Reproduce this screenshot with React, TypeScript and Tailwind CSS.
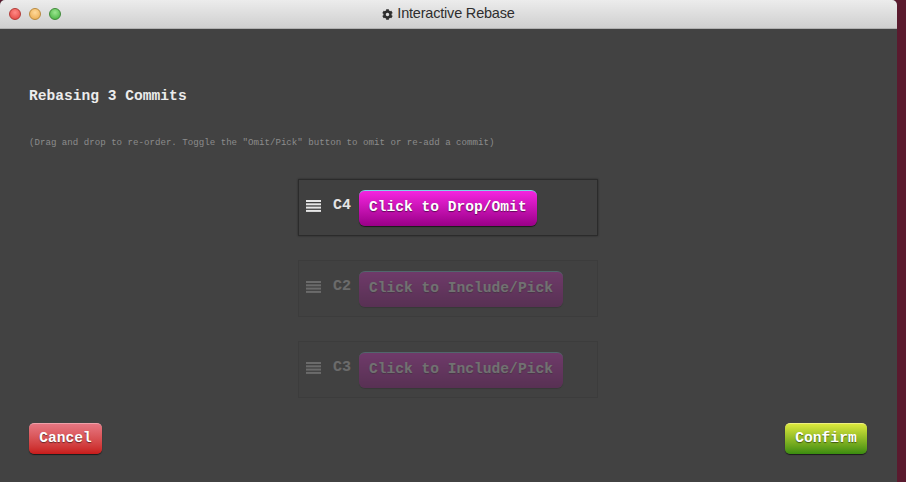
import React from 'react';
import { FaCog } from 'react-icons/fa';

const mono = { fontFamily: '"Liberation Mono", "DejaVu Sans Mono", monospace' };

const Handle = () => (
  <svg width="15" height="12" viewBox="0 0 15 12" className="shrink-0 block -mt-[3px]">
    <rect x="0" y="0" width="15" height="2" fill="#e6e6e6" />
    <rect x="0" y="3.3" width="15" height="2" fill="#e6e6e6" />
    <rect x="0" y="6.6" width="15" height="2" fill="#e6e6e6" />
    <rect x="0" y="9.9" width="15" height="2" fill="#e6e6e6" />
  </svg>
);

type Commit = { id: string; picked: boolean };

const commits: Commit[] = [
  { id: 'C4', picked: true },
  { id: 'C2', picked: false },
  { id: 'C3', picked: false },
];

const CommitRow = ({ commit }: { commit: Commit }) => (
  <div
    className={
      commit.picked
        ? 'w-[300px] h-[57px] flex items-center pl-[7px] border border-[#2b2b2b] bg-[#404040] shadow-[0_0_2px_rgba(0,0,0,0.4)]'
        : 'w-[300px] h-[57px] flex items-center pl-[7px] border border-[#2b2b2b] bg-[#404040] opacity-25'
    }
  >
    <Handle />
    <span className="ml-[12px] -mt-[2px] w-[26px] text-[15px] font-bold text-[#e4e4e4]" style={mono}>
      {commit.id}
    </span>
    <button
      className="h-[36px] px-[10px] rounded-[6px] border-t border-[#7fd0e8] bg-gradient-to-b from-[#f524e0] to-[#9a0088] text-white text-[14.6px] font-bold shadow-[0_1px_1px_rgba(0,0,0,0.6)] [text-shadow:0_1px_1px_rgba(0,0,0,0.5)]"
      style={mono}
    >
      {commit.picked ? 'Click to Drop/Omit' : 'Click to Include/Pick'}
    </button>
  </div>
);

const App = () => {
  return (
    <div className="w-[906px] h-[482px] flex bg-[#5a1a2e] overflow-hidden">
      <div className="w-[897px] h-full flex flex-col bg-[#424242] rounded-t-[5px] overflow-hidden">
        {/* title bar */}
        <div className="relative h-[29px] shrink-0 flex items-center justify-center bg-gradient-to-b from-[#ececec] to-[#cfcfcf] border-b border-[#b0b0b0]">
          <div className="absolute left-[9px] top-[8px] flex gap-[8px]">
            <span className="w-[12px] h-[12px] rounded-full bg-[radial-gradient(circle_at_50%_35%,#ff8a86,#e0413c)] border border-[#b23a36]" />
            <span className="w-[12px] h-[12px] rounded-full bg-[radial-gradient(circle_at_50%_35%,#ffd99a,#e9a84a)] border border-[#b98a3e]" />
            <span className="w-[12px] h-[12px] rounded-full bg-[radial-gradient(circle_at_50%_35%,#9be58f,#3fae3a)] border border-[#3f8a38]" />
          </div>
          <div
            className="flex items-center gap-[4px] text-[14.5px] text-[#2e2e2e]"
            style={{ fontFamily: '"Liberation Sans", Arial, sans-serif' }}
          >
            <FaCog size={11} />
            <span className="tracking-[-0.2px]">Interactive Rebase</span>
          </div>
        </div>

        {/* body */}
        <div className="flex-1 flex flex-col px-[29px]">
          <h1 className="mt-[57px] text-[14.6px] leading-[20px] font-bold text-[#ececec]" style={mono}>
            Rebasing 3 Commits
          </h1>
          <p className="mt-[31px] text-[9.15px] leading-[12px] text-[#8c8c8c]" style={mono}>
            (Drag and drop to re-order. Toggle the "Omit/Pick" button to omit or re-add a commit)
          </p>

          <div className="mt-[30px] pr-[1px] flex flex-col items-center gap-[24px]">
            {commits.map((c) => (
              <CommitRow key={c.id} commit={c} />
            ))}
          </div>

          <div className="mt-[25px] flex justify-between pr-[1px]">
            <button
              className="w-[73px] h-[31px] rounded-[5px] border-t border-[#f0a0a8] bg-gradient-to-b from-[#e67682] to-[#c81a1a] text-white text-[14.6px] font-bold shadow-[0_1px_1px_rgba(0,0,0,0.6)] [text-shadow:0_1px_1px_rgba(0,0,0,0.5)]"
              style={mono}
            >
              Cancel
            </button>
            <button
              className="w-[82px] h-[31px] rounded-[5px] border-t border-[#eef080] bg-gradient-to-b from-[#dbe83c] to-[#3a8c10] text-white text-[14.6px] font-bold shadow-[0_1px_1px_rgba(0,0,0,0.6)] [text-shadow:0_1px_1px_rgba(0,0,0,0.5)]"
              style={mono}
            >
              Confirm
            </button>
          </div>
        </div>
      </div>
      <div className="flex-1" />
    </div>
  );
};

export default App;
